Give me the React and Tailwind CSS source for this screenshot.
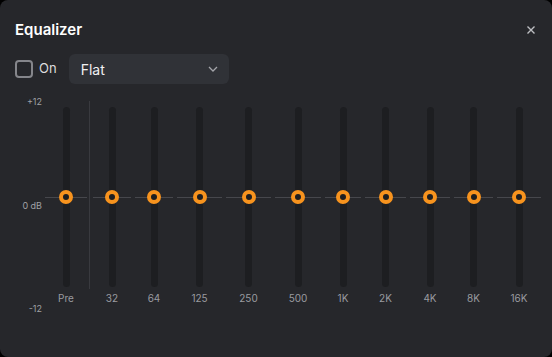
import React from "react";

const bands = [
  { label: "32", w: "w-[38px]" },
  { label: "64", w: "w-[38px]" },
  { label: "125", w: "w-[45px]" },
  { label: "250", w: "w-[45px]" },
  { label: "500", w: "w-[46px]" },
  { label: "1K", w: "w-[36px]" },
  { label: "2K", w: "w-[41px]" },
  { label: "4K", w: "w-[40px]" },
  { label: "8K", w: "w-[39px]" },
  { label: "16K", w: "w-[44px]" },
];

function Band({ label, w }) {
  return (
    <div className={`${w} shrink-0 flex flex-col items-center`}>
      <div className="relative w-full h-[188px] flex justify-center">
        <div className="mt-[3px] w-[7px] h-[180px] rounded-full bg-[#1d1e21]" />
        <div className="absolute left-0 right-0 top-[93px] h-px bg-[#46474c]" />
        <div className="absolute top-[86px] left-1/2 -translate-x-1/2 w-[14px] h-[14px] rounded-full border-[4px] border-[#f7931e] bg-[#1d1e21]" />
      </div>
      <div className="text-[10px] leading-[12px] text-[#9a9ba0]">{label}</div>
    </div>
  );
}

export default function App() {
  return (
    <div className="w-[552px] h-[357px] bg-black" style={{ fontFamily: "Inter, 'Noto Sans', sans-serif" }}>
      <div className="relative w-full h-full rounded-[8px] bg-[#26272b] pl-[15px] pt-[19px]">
        <div className="flex items-center justify-between pr-[16px]">
          <h1 className="text-[15px] leading-[22px] font-semibold text-white">Equalizer</h1>
          <button className="text-[#bdbec2]">
            <svg width="10" height="10" viewBox="0 0 10 10" fill="none" stroke="currentColor" strokeWidth="1.4">
              <path d="M1.5 1.5 L8.5 8.5 M8.5 1.5 L1.5 8.5" />
            </svg>
          </button>
        </div>
        <div className="mt-[13px] flex items-center">
          <div className="w-[18px] h-[18px] rounded-[4px] border-2 border-[#85868b]" />
          <span className="ml-[6px] text-[13px] text-[#dcdcde]">On</span>
          <div className="ml-[12px] w-[160px] h-[30px] rounded-[6px] bg-[#303237] flex items-center justify-between pl-[12px] pr-[11px]">
            <span className="text-[14px] text-[#f0f0f2]">Flat</span>
            <svg width="10" height="6" viewBox="0 0 10 6" fill="none" stroke="#a4a5aa" strokeWidth="1.3">
              <path d="M1 1 L5 5 L9 1" />
            </svg>
          </div>
        </div>
        <div className="mt-[4px] flex">
          <div className="w-[27px] shrink-0 relative h-[220px] text-[9px] text-[#a0a1a5] text-right">
            <div className="absolute right-0 top-[8px] leading-[12px]">+12</div>
            <div className="absolute right-0 top-[112px] leading-[12px]">0 dB</div>
            <div className="absolute right-0 top-[215px] leading-[12px]">-12</div>
          </div>
          <div className="ml-[3px] mt-[16px] flex items-start">
            <Band label="Pre" w="w-[42px]" />
            <div className="ml-[2px] mr-[3px] -mt-[3px] w-px h-[188px] shrink-0 bg-[#393a3f]" />
            <div className="flex gap-[4px]">
              {bands.map((b) => (
                <Band key={b.label} {...b} />
              ))}
            </div>
          </div>
        </div>
      </div>
    </div>
  );
}
